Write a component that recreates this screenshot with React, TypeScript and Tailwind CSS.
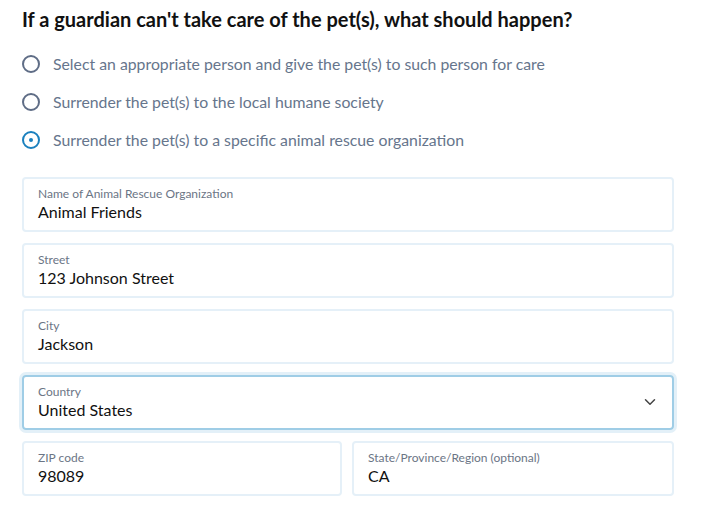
import { ChevronDown } from 'lucide-react'

const options = [
  { label: 'Select an appropriate person and give the pet(s) to such person for care', checked: false },
  { label: 'Surrender the pet(s) to the local humane society', checked: false },
  { label: 'Surrender the pet(s) to a specific animal rescue organization', checked: true },
]

function Radio({ label, checked }: { label: string; checked: boolean }) {
  return (
    <label className="flex h-[38px] items-center gap-[13px]">
      <span
        className={`grid size-[18px] shrink-0 place-items-center rounded-full border-2 ${
          checked ? 'border-[#1b80be]' : 'border-[#5f6d86]'
        }`}
      >
        {checked && <span className="size-[4px] rounded-full bg-[#1b80be]" />}
      </span>
      <span className="text-[15.8px] text-[#66758c]">{label}</span>
    </label>
  )
}

function Field({
  label,
  value,
  focused = false,
  select = false,
  className = '',
}: {
  label: string
  value: string
  focused?: boolean
  select?: boolean
  className?: string
}) {
  return (
    <div
      className={`flex h-[55px] items-center rounded-[4px] border-2 px-[14px] pb-[2px] ${
        focused ? 'border-[#9fcde6] shadow-[0_0_0_3px_#e3f0f8]' : 'border-[#e5f0f8]'
      } ${className}`}
    >
      <div className="flex min-w-0 flex-1 flex-col">
        <span className="text-[12px] leading-[16px] text-[#6b7585]">{label}</span>
        <span className="text-[16px] leading-[20px] text-[#111]">{value}</span>
      </div>
      {select && <ChevronDown className="mr-[-1px] size-[18px] text-[#444]" strokeWidth={2} />}
    </div>
  )
}

export default function App() {
  return (
    <div className="min-h-[515px] bg-white px-[22px] pt-[5px] font-['Lato','Open_Sans',sans-serif]">
      <h1 className="text-[20px] leading-[28px] font-bold text-[#111]">
        If a guardian can't take care of the pet(s), what should happen?
      </h1>
      <div className="mt-[12px] flex flex-col">
        {options.map((o) => (
          <Radio key={o.label} label={o.label} checked={o.checked} />
        ))}
      </div>
      <div className="mt-[18px] mr-[5px] flex flex-col gap-[11px]">
        <Field label="Name of Animal Rescue Organization" value="Animal Friends" />
        <Field label="Street" value="123 Johnson Street" />
        <Field label="City" value="Jackson" />
        <Field label="Country" value="United States" focused select />
        <div className="flex gap-[10px]">
          <Field label="ZIP code" value="98089" className="w-[320px]" />
          <Field label="State/Province/Region (optional)" value="CA" className="flex-1" />
        </div>
      </div>
    </div>
  )
}
